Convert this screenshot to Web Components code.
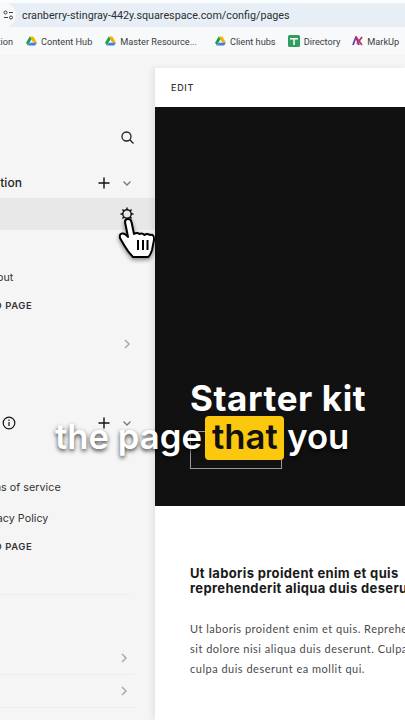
<!DOCTYPE html>
<html lang="en"><head><meta charset="utf-8"><title>Pages</title>
<style>
html,body{margin:0;padding:0;width:405px;height:720px;overflow:hidden;background:#f5f5f5;font-family:"Inter","Liberation Sans",sans-serif}
</style></head><body>
<app-screen>
  <browser-chrome slot="top" url="cranberry-stingray-442y.squarespace.com/config/pages"></browser-chrome>
  <page-sidebar slot="side">
    <side-row kind="search"></side-row>
    <side-row kind="section" label="Navigation" x="-40" gap="14" h="31" actions="plus chev"></side-row>
    <side-row kind="selected" h="32" actions="gear"></side-row>
    <side-row label="About" x="-17" gap="35" h="24"></side-row>
    <side-row kind="add" label="ADD PAGE" x="-20" gap="4" h="24"></side-row>
    <side-row h="32" gap="11" actions="right"></side-row>
    <side-row kind="section" label="Not Linked" x="-63" gap="47" h="32" info actions="plus chev"></side-row>
    <side-row label="Terms of service" x="-25" gap="36" h="24"></side-row>
    <side-row label="Privacy Policy" x="-23" gap="7" h="24"></side-row>
    <side-row kind="add" label="ADD PAGE" x="-20" gap="4" h="24"></side-row>
    <side-rule gap="36" w="130"></side-rule>
    <side-row kind="low" h="33" gap="46" actions="right"></side-row>
    <side-rule gap="0" w="135"></side-rule>
    <side-row kind="low" h="31" gap="0" actions="right"></side-row>
    <side-rule gap="1" w="135"></side-rule>
  </page-sidebar>
  <page-preview slot="main">
    <hero-block title="Starter kit"></hero-block>
    <text-block>
      <span slot="head">Ut laboris proident enim et quis<br>reprehenderit aliqua duis deserunt</span>
      <span slot="body">Ut laboris proident enim et quis. Reprehenderit<br>sit dolore nisi aliqua duis deserunt. Culpa<br>culpa duis deserunt ea mollit qui.</span>
    </text-block>
  </page-preview>
  <hand-cursor slot="over"></hand-cursor>
  <video-caption slot="over"><span>the page</span><mark>that</mark><span>you</span></video-caption>
</app-screen>
<script>
const drive='<svg width="11" height="10" viewBox="0 0 12 11"><path d="M4 .5h4L12 7.300H8z" fill="#f4b400"/><path d="M4 .5 0 7.300l2 3.200 4-6.800z" fill="#1e9e5a"/><path d="M4.200 7.300H12l-2 3.200H2z" fill="#3f7de8"/></svg>';
const chev={
 chev:'<svg width="16" height="16" viewBox="0 0 16 16" fill="none" stroke="#777" stroke-width="1.3"><path d="M4.500 6.500 8 10l3.500-3.500"/></svg>',
 right:'<svg width="16" height="16" viewBox="0 0 16 16" fill="none" stroke="#aaa" stroke-width="1.5"><path d="M6 4l4 4-4 4"/></svg>',
 plus:'<svg width="16" height="16" viewBox="0 0 16 16" fill="none" stroke="#111" stroke-width="1.4"><path d="M8 2.500v11M2.500 8h11"/></svg>',
 gear:'<svg width="16" height="16" viewBox="0 0 16 16" fill="none" stroke="#111" stroke-width="1.4"><circle cx="8" cy="8" r="4.200"/><path d="M8 1.500V4M8 12v2.500M1.500 8H4M12 8h2.500M3.400 3.400l1.800 1.800M10.800 10.800l1.800 1.800M3.400 12.600l1.800-1.800M10.800 5.200l1.800-1.800"/></svg>',
 search:'<svg width="16" height="16" viewBox="0 0 16 16" fill="none" stroke="#222" stroke-width="1.3"><circle cx="7.500" cy="7.500" r="4.500"/><path d="M10.800 10.800 14.500 14.500"/></svg>'
};
function def(name,css,html){
  customElements.define(name,class extends HTMLElement{
    connectedCallback(){
      if(this.shadowRoot)return;
      const s=this.attachShadow({mode:'open'});
      s.innerHTML='<style>'+css+'</style>'+(typeof html==='function'?html(this):html);
    }
  });
}
def('app-screen',`:host{display:flex;flex-direction:column;width:405px;height:720px;position:relative;overflow:hidden;background:#f5f5f5}
.body{display:flex;flex:1;min-height:0}`,
`<slot name="top"></slot><div class="body"><slot name="side"></slot><slot name="main"></slot></div><slot name="over"></slot>`);
def('browser-chrome',`:host{display:block;font-family:Roboto,"Liberation Sans",sans-serif;background:#fbfcfd;padding-top:3px}
.url{height:24px;background:#e7eef6;display:flex;align-items:center;font-size:10.75px;color:#2b2f33}
.url .tune{width:16px;height:24px;border-radius:0 12px 12px 0;background:#f7f9fb;display:flex;align-items:center;justify-content:center;margin-right:6px}
.marks{height:28px;background:#f8f9fa;display:flex;align-items:center;font-size:9.2px;color:#3a3d40;white-space:nowrap}
.m{display:flex;align-items:center;gap:4px;flex:none}
.m svg{flex:none}`,
h=>`<div class="url"><div class="tune"><svg width="11" height="10" viewBox="0 0 11 10" fill="none" stroke="#3a3d40" stroke-width="1"><circle cx="2.500" cy="2.500" r="1.500"/><path d="M6 2.500h4M1 7.500h4"/><circle cx="8" cy="7.500" r="1.500"/></svg></div>${h.getAttribute('url')}</div>
<div class="marks"><span style="flex:none;width:13px;direction:rtl;overflow:hidden">Notion</span>
<span class="m" style="margin-left:13px">${drive}Content Hub</span>
<span class="m" style="margin-left:13px">${drive}Master Resource...</span>
<span class="m" style="margin-left:18px">${drive}Client hubs</span>
<span class="m" style="margin-left:12px"><svg width="12" height="12" viewBox="0 0 12 12"><rect width="12" height="12" rx="1.500" fill="#2f9e5f"/><path d="M2 3h8v1.500H6.800V10H5.300V4.500H2z" fill="#fff"/></svg>Directory</span>
<span class="m" style="margin-left:12px"><svg width="11" height="10" viewBox="0 0 11 10" fill="none" stroke-width="1.800"><path d="M1 9 4 1l3 8" stroke="#6a3fa0"/><path d="M4 1l6 8M10 1 5 8" stroke="#c2366b"/></svg>MarkUp</span></div>`);
def('page-sidebar',`:host{display:flex;flex-direction:column;width:155px;flex:none;padding-top:66px;overflow:hidden;box-sizing:border-box;background:#f5f5f5}`,`<slot></slot>`);
def('side-row',`:host{display:flex;align-items:center;flex:none;box-sizing:border-box;padding-right:20px;font-size:10.7px;color:#333;white-space:nowrap;letter-spacing:.05px}
:host([kind=section]){font-size:12px;font-weight:500;color:#222}
:host([kind=selected]){background:#e8e8e8}
:host([kind=add]){font-size:9.5px;font-weight:600;letter-spacing:.55px;color:#333}
:host([kind=low]){padding-right:23px}
.a{margin-left:auto;display:flex;gap:7px;align-items:center}
.a svg,.i svg{display:block}
.i{margin-left:3px;flex:none}`,
h=>{
 const k=h.getAttribute('kind');
 h.style.height=(h.getAttribute('h')||(k==='search'?32:24))+'px';
 h.style.marginTop=(h.getAttribute('gap')||0)+'px';
 const acts=(h.getAttribute('actions')||(k==='search'?'search':'')).split(' ').filter(Boolean).map(a=>chev[a]).join('');
 const l=h.getAttribute('label');
 const info=h.hasAttribute('info')?'<span class="i"><svg width="14" height="14" viewBox="0 0 14 14" fill="none" stroke="#111" stroke-width="1.2"><circle cx="7" cy="7" r="5.800"/><path d="M7 6v4M7 3.600v1.300"/></svg></span>':'';
 return (l?`<span style="margin-left:${h.getAttribute('x')}px">${l}</span>`:'')+info+`<span class="a">${acts}</span>`;
});
def('side-rule',`:host{display:block;height:1px;flex:none;background:#ededed}`,h=>{h.style.width=h.getAttribute('w')+'px';h.style.marginTop=h.getAttribute('gap')+'px';return ''});
def('page-preview',`:host{display:block;flex:1;min-width:0;margin-top:13px;background:#fff;box-shadow:-3px 0 6px rgba(0,0,0,.07);overflow:hidden;z-index:1}
.edit{height:39px;display:flex;align-items:center;padding-left:16px;font-size:9px;font-weight:500;letter-spacing:.7px;color:#333}`,`<div class="edit">EDIT</div><slot></slot>`);
def('hero-block',`:host{display:flex;flex-direction:column;height:399px;box-sizing:border-box;background:#111;padding:272px 0 0 35px;color:#fff}
h1{margin:0;font:700 35px/38px "Inter","Liberation Sans",sans-serif;letter-spacing:.6px;white-space:nowrap}
.btn{width:92px;height:38px;box-sizing:border-box;border:1px solid #9a9a9a;margin-top:14px}`,h=>`<h1>${h.getAttribute('title')}</h1><div class="btn"></div>`);
def('text-block',`:host{display:block;padding:60px 0 0 35px;white-space:nowrap}
.h{font:700 13px/15px "Inter","Liberation Sans",sans-serif;color:#1a1a1a;letter-spacing:.35px}
.b{margin-top:23px;font:400 11px/20px Lato,"Liberation Sans",sans-serif;color:#4a4a4a;letter-spacing:.5px}`,
`<div class="h"><slot name="head"></slot></div><div class="b"><slot name="body"></slot></div>`);
def('hand-cursor',`:host{position:absolute;left:117px;top:216px;width:40px;height:44px;z-index:3}
svg{display:block;overflow:visible;filter:drop-shadow(0 2px 2px rgba(0,0,0,.45))}`,
`<svg width="40" height="44" viewBox="117 216 40 44"><path d="M125 222Q125 219 128 219Q131 219 131.500 222L134 234Q137 232 139.500 234Q142 232.500 144.500 235Q147 233 150 235Q154.500 234 154 240L152 250Q150 256 148 257L133 257Q128 252 124 245L120 238Q119 234 122 233.500Q125 233 128 237Z" fill="#fff" stroke="#000" stroke-width="2" stroke-linejoin="round"/><path d="M138 240v10M143 240v10M147.500 240v10" stroke="#000" stroke-width="2"/></svg>`);
def('video-caption',`:host{position:absolute;left:55px;top:416px;height:44px;display:flex;align-items:flex-start;z-index:4;font:600 34.7px/40px "Inter","Liberation Sans",sans-serif;color:#fff;white-space:nowrap}
::slotted(span){text-shadow:0 2px 4px rgba(0,0,0,.75)}
::slotted(mark){background:#fcc80e;color:#111;border-radius:4px;padding:0 6.5px 4px;margin:0 3px 0 3.5px}`,`<slot></slot>`);
</script>
</body></html>
